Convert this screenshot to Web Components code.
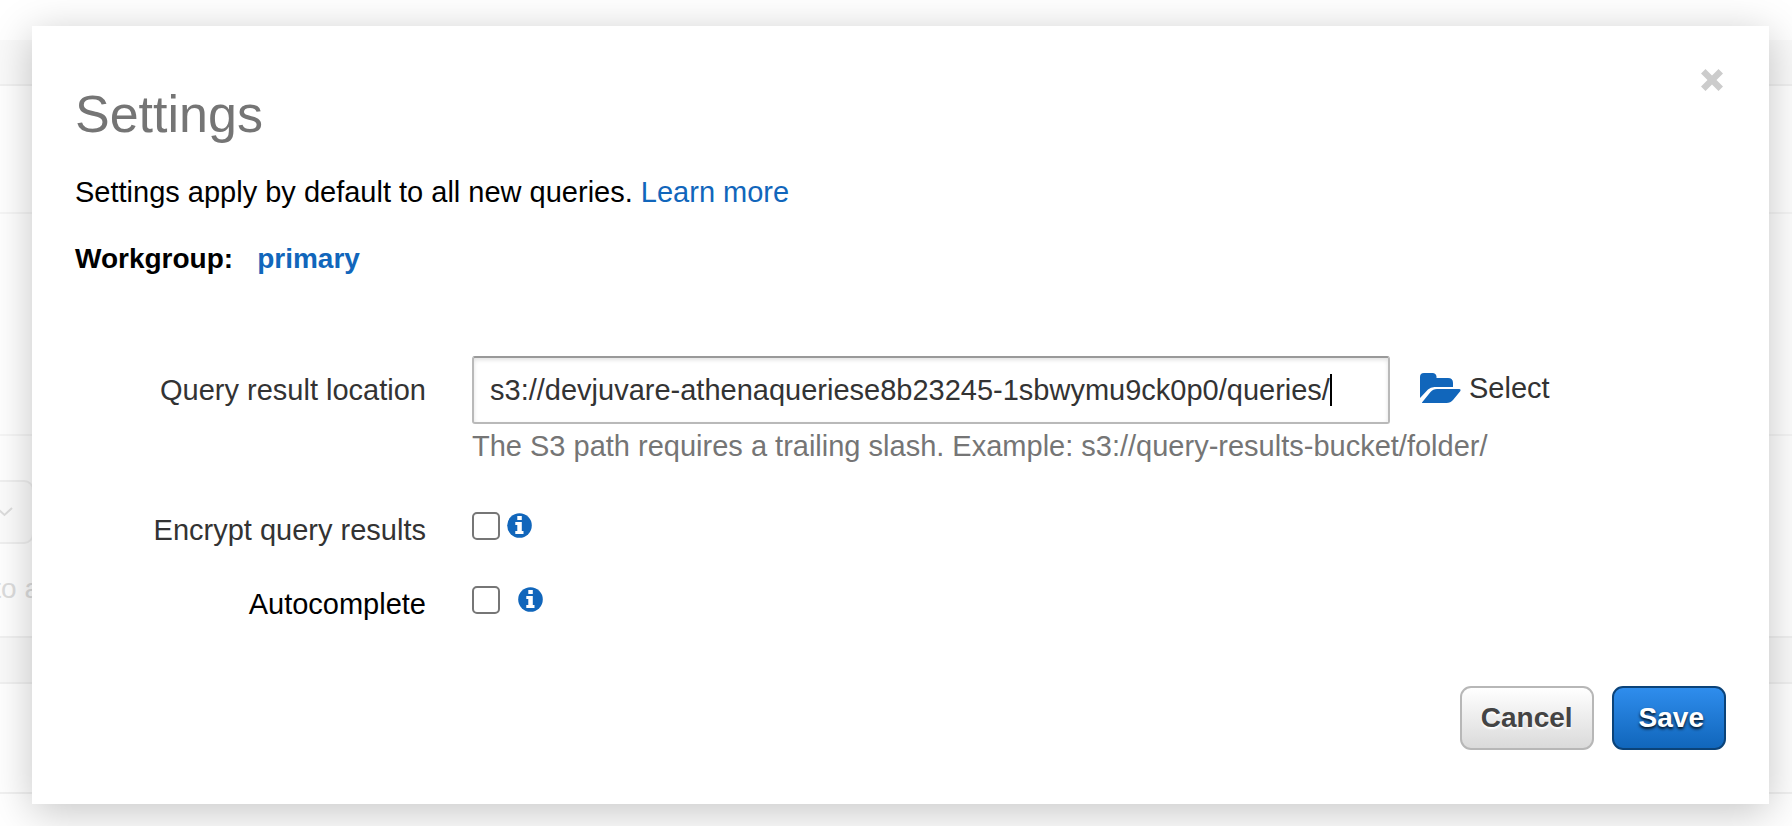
<!DOCTYPE html>
<html lang="en">
<head>
<meta charset="utf-8">
<title>Settings</title>
<style>
html, body { margin: 0; min-height: 100%; background: #fff; }
body { font: 29px/32px "Liberation Sans", Arial, sans-serif; color: #333; overflow: hidden; }
</style>
</head>
<body>
<query-page>
  <settings-dialog>
    <field-row label="Query result location" for="location"><location-field></location-field></field-row>
    <field-row label="Encrypt query results"><check-field name="Encrypt query results"></check-field></field-row>
    <field-row label="Autocomplete" strong><check-field name="Autocomplete" wide></check-field></field-row>
    <action-button slot="actions">Cancel</action-button>
    <action-button slot="actions" primary>Save</action-button>
  </settings-dialog>
</query-page>
<script>
function define(name, html, setup) {
  customElements.define(name, class extends HTMLElement {
    constructor() {
      super();
      const root = this.attachShadow({ mode: 'open' });
      root.innerHTML = html;
      if (setup) setup(this, root);
    }
  });
}

define('query-page', `
<style>
  :host { display: grid; min-height: 100vh; overflow: hidden; }
  .page, ::slotted(*) { grid-area: 1 / 1; }
  .page { display: grid; grid-template-rows: 40px 46px 128px 222px 202px 46px 110px; color: #ddd; }
  .page > div { box-sizing: border-box; border-bottom: 2px solid #f6f6f6; overflow: hidden; }
  .page > .top { border: 0; }
  .page > .bar { background: #fafafa; border-color: #f1f1f1; }
  .page > .edge { border-color: #f1f1f1; }
  .menu { box-sizing: border-box; width: 34px; height: 64px; margin-top: 44px; border: 2px solid #f0f0f0; border-left: 0; border-radius: 0 10px 10px 0; background: #fcfcfc; display: flex; align-items: center; }
  .menu svg { width: 14px; height: 10px; }
  p { display: flex; justify-content: flex-end; width: 40px; margin: 29px 0 0; font-size: 28px; white-space: nowrap; }
</style>
<div class="page" aria-hidden="true">
  <div class="top"></div><div class="bar"></div><div></div><div></div>
  <div class="edge"><div class="menu"><svg viewBox="0 0 14 10"><path d="M-3 1 4.500 8 12 1" fill="none" stroke="#ddd" stroke-width="2"/></svg></div><p>to a</p></div>
  <div class="bar"></div><div class="edge"></div>
</div>
<slot></slot>`);

define('settings-dialog', `
<style>
  :host { display: block; padding: 26px 23px 22px 32px; }
  section { box-sizing: border-box; background: #fff; padding: 42px 43px 54px; box-shadow: 0 8px 40px rgba(0,0,0,.23); }
  header { display: flex; justify-content: space-between; align-items: flex-start; }
  h1 { margin: 16px 0 0; font-weight: 400; font-size: 52px; line-height: 60px; color: #757575; }
  .close { border: 0; background: none; padding: 0; margin: 0 2px 0 0; width: 24px; height: 24px; }
  .close svg { display: block; width: 24px; height: 24px; }
  p { margin: 0; color: #000; }
  .intro { margin-top: 32px; }
  .group { margin-top: 35px; font-weight: 700; font-size: 28px; display: flex; gap: 24px; }
  a { color: #1166bb; text-decoration: none; }
  form { margin-top: 81px; }
  footer { display: flex; justify-content: flex-end; gap: 18px; margin-top: 66px; }
</style>
<section role="dialog" aria-labelledby="title">
  <header><h1 id="title">Settings</h1>
  <button class="close" aria-label="Close"><svg viewBox="0 0 24 24"><path d="M5.500 1 12 7.500 18.500 1 23 5.500 16.500 12 23 18.500 18.500 23 12 16.500 5.500 23 1 18.500 7.500 12 1 5.500Z" fill="#ccc"/></svg></button></header>
  <p class="intro">Settings apply by default to all new queries. <a href="#">Learn more</a></p>
  <p class="group"><span>Workgroup:</span><a href="#">primary</a></p>
  <form><slot></slot></form>
  <footer><slot name="actions"></slot></footer>
</section>`);

define('field-row', `
<style>
  :host { display: grid; grid-template-columns: 351px 1fr; column-gap: 46px; }
  :host(:nth-of-type(2)) { margin-top: 50px; }
  :host(:nth-of-type(3)) { margin-top: 40px; }
  .label { text-align: right; padding-top: 2px; }
  :host([for]) .label { padding-top: 18px; }
  :host([strong]) .label { color: #000; }
</style>
<span class="label"></span><slot></slot>`, (host, root) => {
  root.querySelector('.label').textContent = host.getAttribute('label');
});

define('location-field', `
<style>
  :host { display: block; }
  .line { display: flex; align-items: center; gap: 30px; }
  .box { position: relative; flex: 0 1 918px; }
  input { box-sizing: border-box; width: 100%; height: 68px; display: block; margin: 0; padding: 0 16px; border: 2px solid #b9b9b9; border-top-color: #999; border-radius: 3px; box-shadow: inset 0 2px 4px rgba(0,0,0,.12); font: inherit; color: #333; background: #fff; outline: 0; }
  .caret { position: absolute; left: 858px; top: 18px; width: 2px; height: 32px; background: #000; }
  button { border: 0; background: none; padding: 0 0 4px; font: inherit; color: #333; display: flex; align-items: center; gap: 8px; }
  svg { width: 41px; height: 30px; }
  .help { margin: 6px 0 0; color: #757575; }
</style>
<div class="line">
  <div class="box"><input type="text" aria-label="Query result location" value="s3://devjuvare-athenaqueriese8b23245-1sbwymu9ck0p0/queries/"><span class="caret"></span></div>
  <button type="button"><svg viewBox="0 0 41 30"><path fill="#1166bb" d="M0 25V4Q0 0 4 0h8.500Q16 0 16.500 3.500V5H28q5 0 5 5v4H14.500Q10.500 14 8 16.500Z"/><path fill="#1166bb" d="M2 29.500 10.500 19q2.500-3 6.500-3h22q2.500 0 1 2.500L33 27q-2.500 3-6.500 3H3Q1.500 30 2 29.500Z"/></svg>Select</button>
</div>
<p class="help">The S3 path requires a trailing slash. Example: s3://query-results-bucket/folder/</p>`);

define('check-field', `
<style>
  :host { display: flex; align-items: flex-start; gap: 7px; }
  :host([wide]) { gap: 18px; }
  input { appearance: none; box-sizing: border-box; margin: 0; width: 28px; height: 28px; border: 2px solid #767676; border-radius: 5px; background: #fff; }
  svg { width: 25px; height: 25px; margin-top: 1px; }
</style>
<input type="checkbox">
<svg viewBox="0 0 25 25" role="img" aria-label="Information"><circle cx="12.500" cy="12.500" r="12.300" fill="#1166bb"/><path fill="#fff" d="M10.300 3H14.800V7H10.300ZM8.300 9H14.800V18H16.500V21H8.300V18H10.300V12H8.300Z"/></svg>`, (host, root) => {
  root.querySelector('input').setAttribute('aria-label', host.getAttribute('name'));
});

define('action-button', `
<style>
  :host { display: block; }
  button { box-sizing: border-box; height: 64px; padding: 0 19px; border: 2px solid #b7b7b7; border-radius: 11px; background: linear-gradient(#fff, #dadada); font: inherit; font-size: 28px; font-weight: 700; color: #444; text-shadow: 0 2px 2px #fff; }
  :host([primary]) button { padding: 0 20px 0 25px; border-color: #0b4379; background: linear-gradient(#2f8ded, #1166bb); color: #fff; text-shadow: 0 2px 3px rgba(0,0,0,.9); }
</style>
<button type="button"><slot></slot></button>`);
</script>
</body>
</html>
